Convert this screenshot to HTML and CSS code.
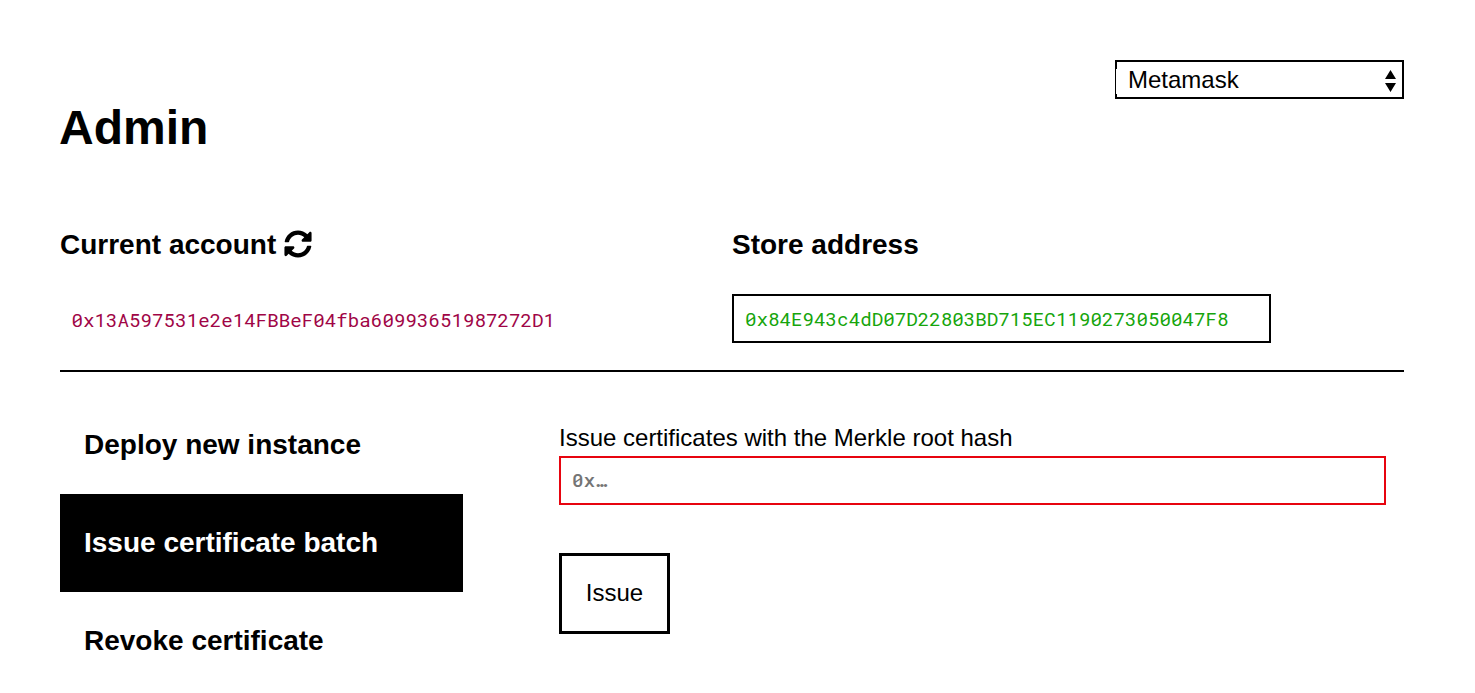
FILE: index.html
```html
<!DOCTYPE html>
<html lang="en">
<head>
<meta charset="utf-8">
<title>Admin</title>
<link rel="stylesheet" href="styles.css">
</head>
<body>
<main class="page">
  <header class="header">
    <h1 class="title">Admin</h1>
    <div class="select" role="combobox">
      <span>Metamask</span>
      <svg class="select-arrows" viewBox="0 0 11 22"><path d="M5.500 0L11 9H0zM0 13h11l-5.500 9z"/></svg>
    </div>
  </header>
  <section class="accounts">
    <div class="account">
      <h3 class="heading">Current account <svg class="refresh" viewBox="0 0 512 512"><path d="M370.720 133.280C339.458 104.008 298.888 87.962 255.848 88c-77.458.068-144.328 53.178-162.791 126.850-1.344 5.363-6.122 9.150-11.651 9.150H24.103c-7.498 0-13.194-6.807-11.807-14.176C33.933 94.924 134.813 8 256 8c66.448 0 126.791 26.136 171.315 68.685L463.030 40.970C478.149 25.851 504 36.559 504 57.941V192c0 13.255-10.745 24-24 24H345.941c-21.382 0-32.090-25.851-16.971-40.971l41.750-41.749zM32 296h134.059c21.382 0 32.090 25.851 16.971 40.971l-41.750 41.750c31.262 29.273 71.835 45.319 114.876 45.280 77.418-.070 144.315-53.144 162.787-126.849 1.344-5.363 6.122-9.150 11.651-9.150h57.304c7.498 0 13.194 6.807 11.807 14.176C478.067 417.076 377.187 504 256 504c-66.448 0-126.791-26.136-171.315-68.685L48.970 471.030C33.851 486.149 8 475.441 8 454.059V320c0-13.255 10.745-24 24-24z"/></svg></h3>
      <div class="hash">0x13A597531e2e14FBBeF04fba60993651987272D1</div>
    </div>
    <div class="account">
      <h3 class="heading">Store address</h3>
      <input class="field store" value="0x84E943c4dD07D22803BD715EC1190273050047F8">
    </div>
  </section>
  <section class="panel">
    <nav class="tabs">
      <a class="tab">Deploy new instance</a>
      <a class="tab active">Issue certificate batch</a>
      <a class="tab">Revoke certificate</a>
    </nav>
    <form class="form">
      <label class="label" for="root">Issue certificates with the Merkle root hash</label>
      <input class="field root" id="root" placeholder="0x…">
      <button class="button" type="button">Issue</button>
    </form>
  </section>
</main>
</body>
</html>
```
FILE: styles.css
```css
* { box-sizing: border-box; }
body {
  margin: 0;
  background: #fff;
  color: #000;
  font: 24px/28px "Liberation Sans", Arial, sans-serif;
  overflow: hidden;
}
.page { width: 1404px; padding: 60px 0 0 60px; }
.header { display: flex; justify-content: space-between; align-items: flex-start; height: 170px; }
.title { margin: 40px 0 0 -1px; font-size: 48px; line-height: 56px; }
.select {
  position: relative;
  display: flex;
  justify-content: space-between;
  align-items: center;
  width: 289px;
  height: 39px;
  padding: 0 6px 0 11px;
  border: 2px solid #000;
}
.select::before {
  content: "";
  position: absolute;
  left: -1px;
  top: 7px;
  width: 1px;
  height: 25px;
  background: #fff;
}
.select-arrows { width: 11px; height: 22px; margin-top: 2px; }
.accounts { display: grid; grid-template-columns: 1fr 1fr; height: 142px; border-bottom: 2px solid #000; }
.heading { display: flex; gap: 8px; height: 28px; margin: 0; font-size: 28px; line-height: 30px; }
.refresh { width: 28px; height: 28px; }
.hash, .field { font: 400 19.2px/24px "Roboto Mono", "DejaVu Sans Mono", monospace; }
.hash { margin-top: 50px; padding-left: 11.5px; color: #a00546; }
.field { display: block; height: 49px; padding: 0 11px; border: 2px solid #000; border-radius: 0; background: #fff; outline: 0; }
.store { width: 539px; margin-top: 36px; color: #16a50c; }
.panel { display: flex; gap: 96px; padding-top: 24px; }
.tabs { width: 403px; }
.tab { display: flex; align-items: center; height: 98px; padding: 0 24px; font-size: 28px; font-weight: bold; }
.active { background: #000; color: #fff; }
.form { padding-top: 28px; }
.label { display: block; height: 32px; }
.root { width: 827px; padding-bottom: 2px; border-color: #e7040f; font-weight: 500; }
.root::placeholder { color: #757575; opacity: 1; }
.button {
  width: 111px;
  height: 81px;
  margin-top: 48px;
  padding: 0 0 1px;
  border: 3px solid #000;
  background: #fff;
  color: #000;
  font: inherit;
}
```
